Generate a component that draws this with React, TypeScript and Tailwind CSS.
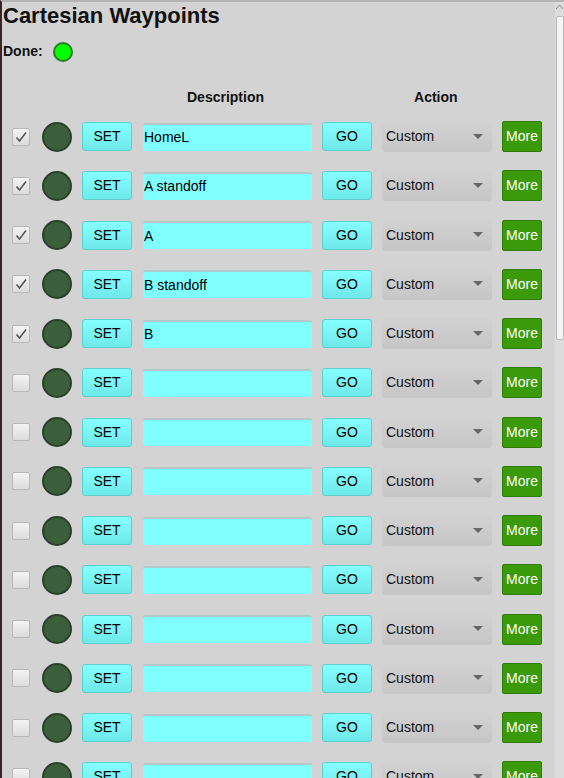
import React from "react";

const rows = [
  { checked: true, desc: "HomeL" },
  { checked: true, desc: "A standoff" },
  { checked: true, desc: "A" },
  { checked: true, desc: "B standoff" },
  { checked: true, desc: "B" },
  ...Array.from({ length: 9 }, () => ({ checked: false, desc: "" })),
];

function Row({ checked, desc }: { checked: boolean; desc: string }) {
  return (
    <div className="flex h-[49.25px] shrink-0 items-center pl-[10px]">
      <div className="flex h-[18px] w-[18px] items-center justify-center rounded-[2px] border border-[#b8b8b8] bg-gradient-to-b from-[#f4f4f4] to-[#dcdcdc]">
        {checked && (
          <svg width="14" height="14" viewBox="0 0 14 14">
            <path d="M2.5 7.5 L5.5 11 L12 2.5" fill="none" stroke="#555" strokeWidth="1.6" />
          </svg>
        )}
      </div>
      <div className="ml-[12px] h-[30px] w-[30px] rounded-full border-2 border-[#2c3f2c] bg-[#3a5f3a]" />
      <div className="ml-[10px] flex h-[29px] w-[50px] items-center justify-center rounded-[3px] border border-[#5ccfcf] bg-gradient-to-b from-[#85ffff] to-[#6ee9e9] text-[14px] text-black">
        SET
      </div>
      <div className="ml-[11px] flex h-[28px] w-[169px] items-center rounded-[3px] border-t-2 border-t-[#b5c8c8] bg-[#80ffff] px-[1px] text-[14px] text-black">
        {desc}
      </div>
      <div className="ml-[10px] flex h-[29px] w-[50px] items-center justify-center rounded-[3px] border border-[#5ccfcf] bg-gradient-to-b from-[#85ffff] to-[#6ee9e9] text-[14px] text-black">
        GO
      </div>
      <div className="ml-[10px] flex h-[31px] w-[110px] items-center justify-between rounded-[4px] bg-gradient-to-b from-[#d2d2d2] to-[#c6c6c6] pl-[4px] pr-[9px] text-[14px] text-[#111]">
        <span>Custom</span>
        <svg width="10" height="6" viewBox="0 0 10 6">
          <path d="M0 0 L10 0 L5 5 Z" fill="#666" />
        </svg>
      </div>
      <div className="ml-[10px] flex h-[31px] w-[40px] items-center justify-center rounded-[2px] border border-[#2e7d07] bg-[#3a9a0a] text-[14px] text-white">
        More
      </div>
    </div>
  );
}

export default function App() {
  return (
    <div
      className="flex h-[778px] w-[564px] overflow-hidden border-l-2 border-t-2 border-l-[#3a2626] border-t-[#b4b4b4] bg-[#d3d3d3]"
      style={{ fontFamily: '"Liberation Sans", Arial, sans-serif' }}
    >
      <div className="flex min-w-0 flex-1 flex-col">
        <div className="pl-[1px] pt-[1px] text-[22px] font-bold leading-[26px] text-[#111]">Cartesian Waypoints</div>
        <div className="mt-[12px] flex items-center pl-[1px]">
          <span className="text-[14px] font-bold text-[#111]">Done:</span>
          <div className="ml-[10px] h-[20px] w-[20px] rounded-full border-2 border-[#2a7a2a] bg-[#00ff00]" />
        </div>
        <div className="mt-[25px] flex h-[20px] items-center text-[14px] font-bold text-[#111]">
          <span className="ml-[185px]">Description</span>
          <span className="ml-[150px]">Action</span>
        </div>
        <div className="mt-[5px] flex flex-col">
          {rows.map((r, i) => (
            <Row key={i} checked={r.checked} desc={r.desc} />
          ))}
        </div>
      </div>
      <div className="relative flex w-[9px] shrink-0 flex-col bg-[#dcdcdc]">
        <svg width="9" height="8" viewBox="0 0 9 8" className="mt-[1px]">
          <path d="M1 6 L4.5 2 L8 6" fill="none" stroke="#888" strokeWidth="1" />
        </svg>
        <div className="ml-[1px] mt-[5px] h-[324px] w-[8px] rounded-[2px] border border-[#b8b8b8] bg-[#f4f4f4]" />
      </div>
    </div>
  );
}
